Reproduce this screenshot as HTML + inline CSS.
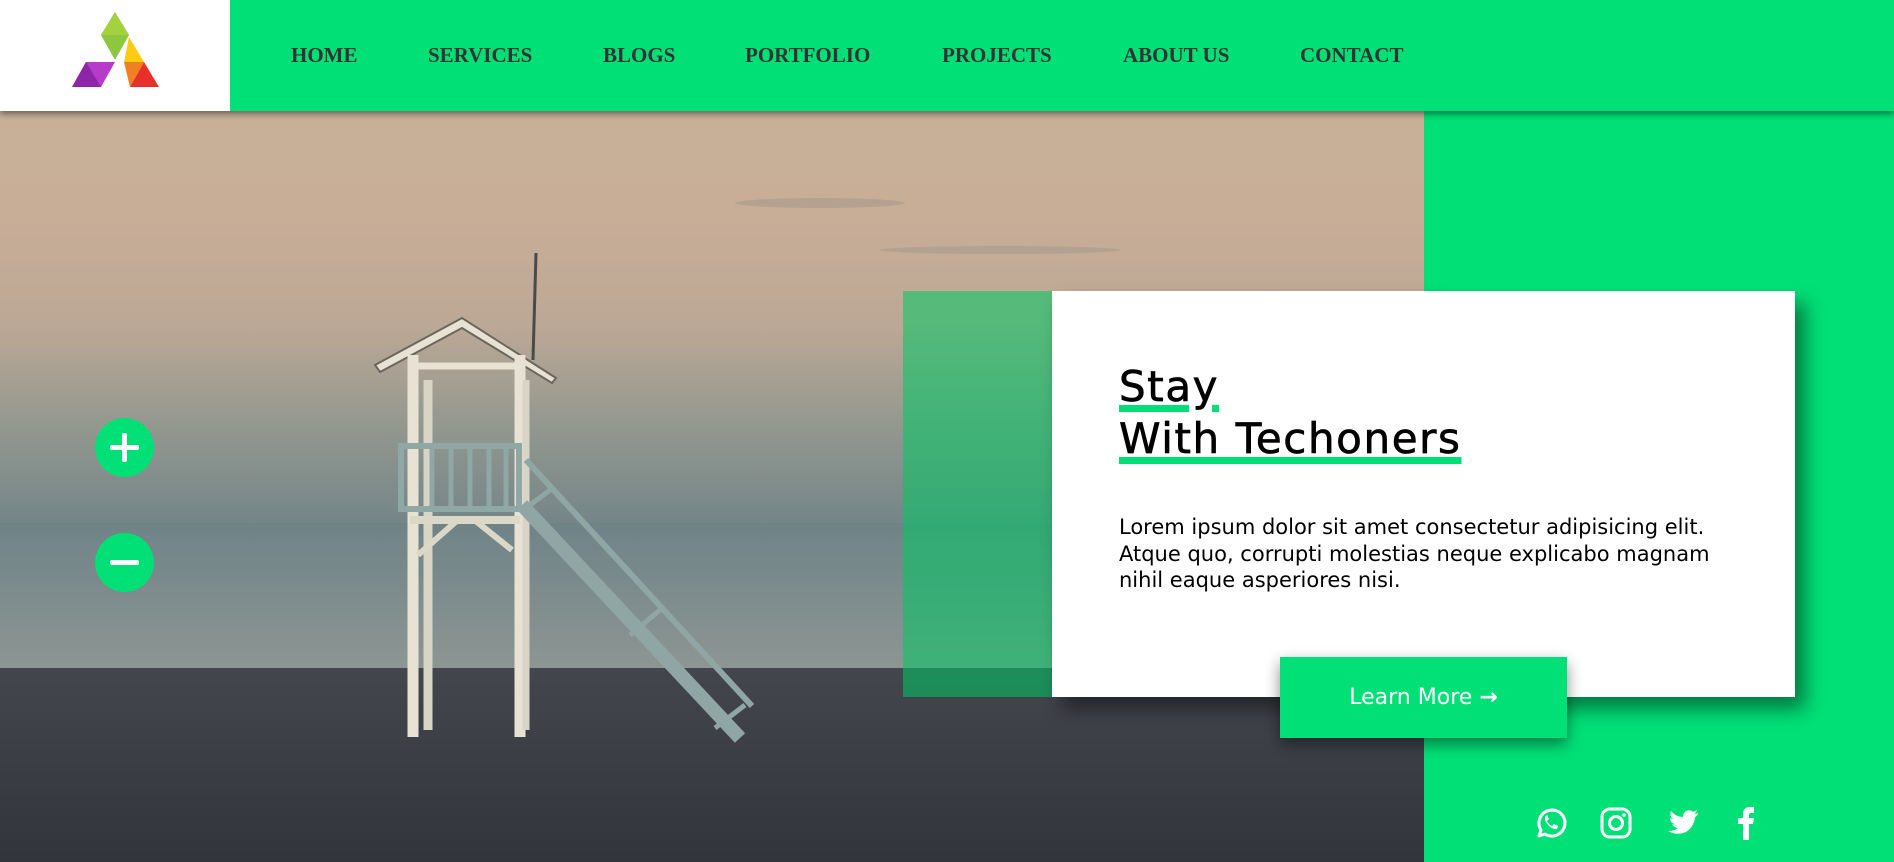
<!DOCTYPE html>
<html><head><meta charset="utf-8"><style>
*{margin:0;padding:0;box-sizing:border-box}
body{width:1894px;height:862px;overflow:hidden;position:relative;background:#00e077;font-family:"DejaVu Sans","Liberation Sans",sans-serif}
#bg{position:absolute;left:0;top:0}
header{position:absolute;left:0;top:0;width:1894px;height:111px;background:#00e077;box-shadow:0 3px 6px rgba(0,0,0,.45);z-index:5}
.logo{position:absolute;left:0;top:0;width:230px;height:111px;background:#fff}
nav a{position:absolute;top:43px;font:bold 21px "Liberation Serif",serif;color:#333;text-decoration:none;white-space:nowrap}
.circ{position:absolute;left:95px;width:59px;height:59px;border-radius:50%;background:#00e077}
.circ:before,.circ:after{content:"";position:absolute;background:#fff;border-radius:2px}
.circ:before{left:15px;top:27px;width:29px;height:5px}
.plus:after{left:27px;top:15px;width:5px;height:29px}
.ov{position:absolute;left:903px;top:291px;width:160px;height:406px;background:rgba(0,200,100,.55)}
.card{position:absolute;left:1052px;top:291px;width:743px;height:406px;background:#fff;box-shadow:10px 12px 18px rgba(0,0,0,.45)}
h1{position:absolute;left:67px;top:70px;font-weight:normal;font-size:42px;line-height:52px;color:#000;letter-spacing:1.6px;-webkit-text-stroke:0.7px #000}
h1 span{text-decoration:underline;text-decoration-color:#00e077;text-decoration-thickness:7px;text-underline-offset:4px;text-decoration-skip-ink:auto}
p{position:absolute;left:67px;top:223px;width:610px;font-size:21px;line-height:26.5px;color:#000}
.btn{position:absolute;left:1280px;top:657px;width:287px;height:81px;background:#00e077;color:#fff;font-size:22px;text-align:center;line-height:81px;box-shadow:0 6px 14px rgba(0,0,0,.45)}
.soc{position:absolute;top:806px}
</style></head><body>
<svg id="bg" width="1424" height="862" viewBox="0 0 1424 862">
<defs>
<linearGradient id="sky" x1="0" y1="0" x2="0" y2="1">
<stop offset="0" stop-color="#c6b39a"/><stop offset=".4" stop-color="#c9ae97"/><stop offset=".62" stop-color="#bca896"/><stop offset=".8" stop-color="#95998f"/><stop offset="1" stop-color="#748588"/></linearGradient>
<linearGradient id="sea" x1="0" y1="0" x2="0" y2="1"><stop offset="0" stop-color="#6f8387"/><stop offset="1" stop-color="#8d9693"/></linearGradient>
<linearGradient id="sand" x1="0" y1="0" x2="0" y2="1"><stop offset="0" stop-color="#43464d"/><stop offset="1" stop-color="#32343c"/></linearGradient>
</defs>
<rect x="0" y="0" width="1424" height="525" fill="url(#sky)"/>
<ellipse cx="820" cy="203" rx="85" ry="5" fill="#8c8a84" opacity=".35"/>
<ellipse cx="1000" cy="250" rx="120" ry="4" fill="#8c8a84" opacity=".3"/>
<rect x="0" y="523" width="1424" height="147" fill="url(#sea)"/>
<rect x="0" y="668" width="1424" height="200" fill="url(#sand)"/>
<g stroke-linecap="butt">
<line x1="536" y1="253" x2="533" y2="360" stroke="#4a4a4a" stroke-width="3"/>
<polygon points="375,365 462,318 556,378 552,383 462,328 380,372" fill="#e8e2d2" stroke="#6a665e" stroke-width="2"/>
<line x1="413" y1="355" x2="413" y2="737" stroke="#e7e2d3" stroke-width="11"/>
<line x1="520" y1="355" x2="520" y2="737" stroke="#e7e2d3" stroke-width="11"/>
<line x1="428" y1="380" x2="428" y2="730" stroke="#d8d4c6" stroke-width="9"/>
<line x1="526" y1="380" x2="526" y2="730" stroke="#d8d4c6" stroke-width="7"/>
<line x1="416" y1="366" x2="518" y2="366" stroke="#e7e2d3" stroke-width="7"/>
<line x1="410" y1="520" x2="520" y2="520" stroke="#dcd8c8" stroke-width="8"/>
<line x1="418" y1="555" x2="460" y2="518" stroke="#dcd8c8" stroke-width="6"/>
<line x1="472" y1="518" x2="512" y2="550" stroke="#dcd8c8" stroke-width="6"/>
<rect x="401" y="446" width="118" height="63" fill="none" stroke="#8fa7a5" stroke-width="6"/>
<g stroke="#8fa7a5" stroke-width="5"><line x1="432" y1="446" x2="432" y2="509"/><line x1="451" y1="446" x2="451" y2="509"/><line x1="470" y1="446" x2="470" y2="509"/><line x1="489" y1="446" x2="489" y2="509"/><line x1="506" y1="446" x2="506" y2="509"/></g>
<line x1="522" y1="505" x2="740" y2="738" stroke="#8fa6a4" stroke-width="14"/>
<line x1="526" y1="460" x2="752" y2="706" stroke="#8fa6a4" stroke-width="6"/>
<line x1="530" y1="505" x2="550" y2="490" stroke="#8fa6a4" stroke-width="5"/>
<line x1="630" y1="635" x2="660" y2="610" stroke="#8fa6a4" stroke-width="5"/>
<line x1="715" y1="728" x2="745" y2="705" stroke="#8fa6a4" stroke-width="5"/>
</g>
</svg>
<header>
<div class="logo"><svg width="230" height="111" viewBox="0 0 230 111">
<polygon points="115,12 101,35 115,60 129,35" fill="#8dc63f"/>
<polygon points="115,12 101,35 129,35" fill="#a4d13c"/>
<polygon points="72,87 86,62 115,62 101,87" fill="#b73bc8"/>
<polygon points="72,87 86,62 101,87" fill="#8e24a8"/>
<polygon points="129,37 144,62 124,62" fill="#ffcc11"/>
<polygon points="124,62 144,62 130,87" fill="#f08022"/>
<polygon points="144,62 159,87 130,87" fill="#e8302a"/>
</svg></div>
<nav>
<a style="left:291px">HOME</a><a style="left:428px">SERVICES</a><a style="left:603px">BLOGS</a><a style="left:745px">PORTFOLIO</a><a style="left:942px">PROJECTS</a><a style="left:1123px">ABOUT US</a><a style="left:1300px">CONTACT</a>
</nav>
</header>
<div class="circ plus" style="top:418px"></div>
<div class="circ" style="top:533px"></div>
<div class="ov"></div>
<div class="card">
<h1><span>Stay</span><br><span>With Techoners</span></h1>
<p>Lorem ipsum dolor sit amet consectetur adipisicing elit. Atque quo, corrupti molestias neque explicabo magnam nihil eaque asperiores nisi.</p>
</div>
<div class="btn">Learn More <b>&#8594;</b></div>
<svg class="soc" style="left:1533px" width="34" height="34" viewBox="0 0 34 34"><path d="M6 30 L8 24 A13 13 0 1 1 12 28 Z" fill="none" stroke="#fff" stroke-width="3" stroke-linejoin="round"/><path d="M12 11 q-1 4 4 9 q5 4 8 3 l1-3 -4-2 -2 2 q-4-2 -5-5 l2-2 -2-4 z" fill="#fff"/></svg>
<svg class="soc" style="left:1599px" width="34" height="34" viewBox="0 0 34 34"><rect x="3" y="3" width="28" height="28" rx="8" fill="none" stroke="#fff" stroke-width="3"/><circle cx="17" cy="17" r="6.5" fill="none" stroke="#fff" stroke-width="3"/><circle cx="25" cy="9" r="1.8" fill="#fff"/></svg>
<svg class="soc" style="left:1664px" width="36" height="34" viewBox="0 0 36 34"><path d="M34 7 q-2 1 -4 1 q2-1 3-4 q-2 1-4 2 q-3-3-7-1 q-3 2-3 6 q-7 0-12-6 q-2 5 2 8 q-1 0-3-1 q0 5 5 6 q-1 1-3 0 q2 4 6 4 q-4 3-10 3 q9 5 18 1 q8-5 9-15 q2-1 3-3z" fill="#fff"/></svg>
<svg class="soc" style="left:1734px" width="24" height="34" viewBox="0 0 24 34"><path d="M9 34 V18 H4 V12 H9 V8 Q9 1 16 1 H20 V7 H17 Q15 7 15 9 V12 H20 L19 18 H15 V34 Z" fill="#fff"/></svg>
</body></html>
